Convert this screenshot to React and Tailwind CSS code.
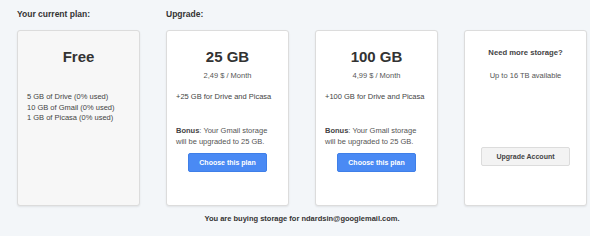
import React from 'react';

const font = { fontFamily: '"Liberation Sans", Arial, sans-serif' };

const Card = ({ gray, children }) => (
  <div
    className={`h-[176px] rounded-[3px] border border-[#dcdcdc] shadow-[0_1px_2px_rgba(0,0,0,0.08)] flex flex-col ${
      gray ? 'bg-[#f7f7f7]' : 'bg-white'
    }`}
  >
    {children}
  </div>
);

const BlueButton = () => (
  <button className="mx-auto mt-[6px] w-[79px] h-[19px] rounded-[2px] bg-[#4a8af4] border border-[#3f7fe8] text-white text-[7px] font-bold leading-none">
    Choose this plan
  </button>
);

const PlanCard = ({ size, price, extra }) => (
  <Card>
    <div className="pt-[17px] text-center text-[15px] font-bold leading-[18px] text-[#333]">{size}</div>
    <div className="mt-[5px] text-center text-[7.5px] leading-[10px] text-[#555]">{price}</div>
    <div className="mt-[11px] pl-[9px] text-[7.5px] leading-[10px] text-[#444]">{extra}</div>
    <div className="mt-[23px] pl-[9px] pr-[16px] text-[7.5px] leading-[11px] text-[#555]">
      <span className="font-bold text-[#444]">Bonus</span>: Your Gmail storage will be upgraded to 25 GB.
    </div>
    <BlueButton />
  </Card>
);

export default function App() {
  return (
    <div style={font} className="w-[590px] h-[236px] bg-[#f3f6f9] pl-[17px] pr-[3px] pt-[9px]">
      <div className="grid grid-cols-[123px_123px_123px_123px] gap-x-[26px]">
        <div className="text-[8.5px] font-bold leading-[10px] text-[#333]">Your current plan:</div>
        <div className="col-span-3 text-[8.5px] font-bold leading-[10px] text-[#333]">Upgrade:</div>

        <div className="col-span-4 h-[11px]" />

        <Card gray>
          <div className="pt-[17px] text-center text-[15px] font-bold leading-[18px] text-[#333]">Free</div>
          <div className="mt-[26px] pl-[9px] text-[7.5px] leading-[10.5px] text-[#444]">
            <div>5 GB of Drive (0% used)</div>
            <div>10 GB of Gmail (0% used)</div>
            <div>1 GB of Picasa (0% used)</div>
          </div>
        </Card>

        <PlanCard size="25 GB" price="2,49 $ / Month" extra="+25 GB for Drive and Picasa" />
        <PlanCard size="100 GB" price="4,99 $ / Month" extra="+100 GB for Drive and Picasa" />

        <Card>
          <div className="pt-[17px] text-center text-[7.7px] font-bold leading-[10px] text-[#444]">Need more storage?</div>
          <div className="mt-[13px] text-center text-[7.5px] leading-[10px] text-[#555]">Up to 16 TB available</div>
          <button className="mx-auto mt-[66px] w-[89px] h-[19px] rounded-[2px] bg-[#f3f3f3] border border-[#dcdcdc] text-[#444] text-[7px] font-bold leading-none">
            Upgrade Account
          </button>
        </Card>

        <div className="col-span-4 mt-[8px] text-center text-[7.5px] font-bold leading-[10px] text-[#333]">
          You are buying storage for ndardsin@googlemail.com.
        </div>
      </div>
    </div>
  );
}
